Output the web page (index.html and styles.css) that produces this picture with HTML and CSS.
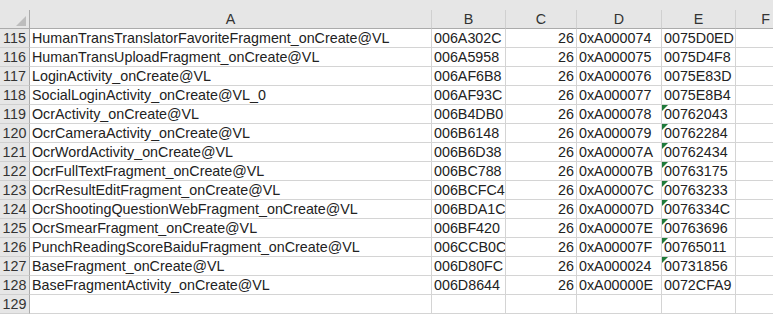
FILE: index.html
```html
<!DOCTYPE html>
<html lang="en">
<head>
<meta charset="utf-8">
<title>Sheet</title>
<link rel="stylesheet" href="styles.css">
</head>
<body>
<div class="sheet">
  <div class="strip"></div>
  <div class="grid">
    <div class="ch corner"><span class="tri"></span></div>
    <div class="ch">A</div>
    <div class="ch">B</div>
    <div class="ch">C</div>
    <div class="ch">D</div>
    <div class="ch">E</div>
    <div class="ch f">F</div>

    <div class="rh">115</div><div class="c">HumanTransTranslatorFavoriteFragment_onCreate@VL</div><div class="c">006A302C</div><div class="c num">26</div><div class="c">0xA000074</div><div class="c">0075D0ED</div><div class="c"></div>
    <div class="rh">116</div><div class="c">HumanTransUploadFragment_onCreate@VL</div><div class="c">006A5958</div><div class="c num">26</div><div class="c">0xA000075</div><div class="c">0075D4F8</div><div class="c"></div>
    <div class="rh">117</div><div class="c">LoginActivity_onCreate@VL</div><div class="c">006AF6B8</div><div class="c num">26</div><div class="c">0xA000076</div><div class="c">0075E83D</div><div class="c"></div>
    <div class="rh">118</div><div class="c">SocialLoginActivity_onCreate@VL_0</div><div class="c">006AF93C</div><div class="c num">26</div><div class="c">0xA000077</div><div class="c">0075E8B4</div><div class="c"></div>
    <div class="rh">119</div><div class="c">OcrActivity_onCreate@VL</div><div class="c">006B4DB0</div><div class="c num">26</div><div class="c">0xA000078</div><div class="c flag">00762043</div><div class="c"></div>
    <div class="rh">120</div><div class="c">OcrCameraActivity_onCreate@VL</div><div class="c">006B6148</div><div class="c num">26</div><div class="c">0xA000079</div><div class="c flag">00762284</div><div class="c"></div>
    <div class="rh">121</div><div class="c">OcrWordActivity_onCreate@VL</div><div class="c">006B6D38</div><div class="c num">26</div><div class="c">0xA00007A</div><div class="c flag">00762434</div><div class="c"></div>
    <div class="rh">122</div><div class="c">OcrFullTextFragment_onCreate@VL</div><div class="c">006BC788</div><div class="c num">26</div><div class="c">0xA00007B</div><div class="c flag">00763175</div><div class="c"></div>
    <div class="rh">123</div><div class="c">OcrResultEditFragment_onCreate@VL</div><div class="c">006BCFC4</div><div class="c num">26</div><div class="c">0xA00007C</div><div class="c flag">00763233</div><div class="c"></div>
    <div class="rh">124</div><div class="c">OcrShootingQuestionWebFragment_onCreate@VL</div><div class="c">006BDA1C</div><div class="c num">26</div><div class="c">0xA00007D</div><div class="c flag">0076334C</div><div class="c"></div>
    <div class="rh">125</div><div class="c">OcrSmearFragment_onCreate@VL</div><div class="c">006BF420</div><div class="c num">26</div><div class="c">0xA00007E</div><div class="c flag">00763696</div><div class="c"></div>
    <div class="rh">126</div><div class="c">PunchReadingScoreBaiduFragment_onCreate@VL</div><div class="c">006CCB0C</div><div class="c num">26</div><div class="c">0xA00007F</div><div class="c flag">00765011</div><div class="c"></div>
    <div class="rh">127</div><div class="c">BaseFragment_onCreate@VL</div><div class="c">006D80FC</div><div class="c num">26</div><div class="c">0xA000024</div><div class="c flag">00731856</div><div class="c"></div>
    <div class="rh">128</div><div class="c">BaseFragmentActivity_onCreate@VL</div><div class="c">006D8644</div><div class="c num">26</div><div class="c">0xA00000E</div><div class="c">0072CFA9</div><div class="c"></div>
    <div class="rh">129</div><div class="c"></div><div class="c"></div><div class="c num"></div><div class="c"></div><div class="c"></div><div class="c"></div>
  </div>
</div>
</body>
</html>
```

FILE: styles.css
```css
html, body {
  margin: 0;
  padding: 0;
  background: #ffffff;
}
.sheet {
  width: 773px;
  height: 314px;
  overflow: hidden;
  font-family: "Liberation Sans", Arial, sans-serif;
  font-size: 14.3px;
  color: #222222;
}
.strip {
  height: 10px;
  background: #e6e6e6;
}
.grid {
  display: grid;
  grid-template-columns: 30px 402px 74px 71px 85px 74px 60px;
  grid-auto-rows: 19px;
}
.grid > div {
  box-sizing: border-box;
  white-space: nowrap;
  overflow: hidden;
}
.ch {
  background: #e6e6e6;
  border-right: 1px solid #d0d0d0;
  border-bottom: 1px solid #ababab;
  text-align: center;
  line-height: 19px;
  color: #333333;
}
.corner {
  position: relative;
  border-right: 1px solid #ababab;
}
.tri {
  position: absolute;
  right: 3px;
  bottom: 2px;
  width: 0;
  height: 0;
  border-left: 10px solid transparent;
  border-bottom: 10px solid #bdbdbd;
}
.rh {
  background: #e6e6e6;
  border-right: 1px solid #ababab;
  border-bottom: 1px solid #d0d0d0;
  text-align: center;
  line-height: 19px;
  color: #333333;
}
.c {
  border-right: 1px solid #d4d4d4;
  border-bottom: 1px solid #d4d4d4;
  padding: 0 2px;
  line-height: 19px;
  position: relative;
}
.num {
  text-align: right;
}
.flag::before {
  content: "";
  position: absolute;
  left: 0;
  top: 0;
  width: 0;
  height: 0;
  border-top: 6px solid #1f7a3a;
  border-right: 6px solid transparent;
}
```
